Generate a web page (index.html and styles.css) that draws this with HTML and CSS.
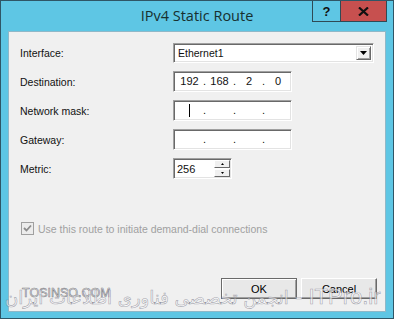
FILE: index.html
```html
<!DOCTYPE html>
<html lang="en">
<head>
    <meta charset="UTF-8">
    <meta name="viewport" content="width=device-width, initial-scale=1.0">
    <title>IPv4 Static Route</title>
    <link rel="stylesheet" href="styles.css">
</head>
<body>
    <!-- Dialog window -->
    <div class="window">
        <div class="titlebar">
            <div></div>
            <div class="title">IPv4 Static Route</div>
            <div class="caption-buttons">
                <span class="cap help">?</span>
                <span class="cap close">
                    <svg width="11" height="9" viewBox="0 0 11 9"><path d="M1 0.5 L10 8.5 M10 0.5 L1 8.5" stroke="#111" stroke-width="2.2"/></svg>
                </span>
            </div>
        </div>

        <div class="client">
            <div class="form">
                <label>Interface:</label>
                <div class="combo">
                    <span class="combo-text">Ethernet1</span>
                    <span class="drop">
                        <svg width="7" height="4" viewBox="0 0 7 4"><path d="M0 0 H7 L3.5 4 Z" fill="#000"/></svg>
                    </span>
                </div>

                <label>Destination:</label>
                <div class="ipbox">
                    <span>192</span><i>.</i><span>168</span><i>.</i><span>2</span><i>.</i><span>0</span>
                </div>

                <label>Network mask:</label>
                <div class="ipbox">
                    <span><b class="caret"></b></span><i>.</i><span></span><i>.</i><span></span><i>.</i><span></span>
                </div>

                <label>Gateway:</label>
                <div class="ipbox">
                    <span></span><i>.</i><span></span><i>.</i><span></span><i>.</i><span></span>
                </div>

                <label>Metric:</label>
                <div class="spin">
                    <span class="spin-text">256</span>
                    <span class="spin-btns">
                        <span class="spin-btn"><svg width="3" height="2" viewBox="0 0 3 2"><path d="M0 2 H3 L1.5 0 Z" fill="#000"/></svg></span>
                        <span class="spin-btn"><svg width="3" height="2" viewBox="0 0 3 2"><path d="M0 0 H3 L1.5 2 Z" fill="#000"/></svg></span>
                    </span>
                </div>
            </div>

            <div class="check-row">
                <span class="checkbox">
                    <svg width="9" height="9" viewBox="0 0 9 9"><path d="M1 4 L3.5 6.5 L8 1.5" fill="none" stroke="#8c8c8c" stroke-width="1.8"/></svg>
                </span>
                <span class="check-label">Use this route to initiate demand-dial connections</span>
            </div>

            <div class="buttons">
                <button class="btn default">OK</button>
                <button class="btn">Cancel</button>
            </div>
        </div>

        <!-- watermark over the bottom of the dialog -->
        <div class="mark-small">TOSINSO.COM</div>
        <div class="mark-big"><span class="mark-fa">انجمن تخصصی فناوری اطلاعات ایران</span><span class="mark-en"> - ITPro.ir</span></div>
    </div>
</body>
</html>
```

FILE: styles.css
```css
/* Page */
body {
    margin: 0;
    background: #ffffff;
}

/* Window frame */
.window {
    position: relative;
    width: 394px;
    height: 319px;
    box-sizing: border-box;
    border: 1px solid #2f5666;
    background: #5ec6e4;
    overflow: hidden;
}

.titlebar {
    display: grid;
    grid-template-columns: 1fr auto 1fr;
    height: 30px;
}

.title {
    font-family: "Open Sans", "Noto Sans", sans-serif;
    font-size: 14.5px;
    color: #17302f;
    line-height: 29px;
}

.caption-buttons {
    justify-self: end;
    align-self: start;
    display: flex;
    margin-right: 6px;
}

.cap {
    display: flex;
    align-items: center;
    justify-content: center;
    height: 20px;
    border: 1px solid #2f4a55;
    border-top: none;
    box-sizing: content-box;
}

.help {
    width: 27px;
    border-right: none;
    font-family: "Liberation Sans", sans-serif;
    font-weight: bold;
    font-size: 13px;
    color: #111;
}

.close {
    width: 45px;
    background: #c7504f;
}

/* Client area */
.client {
    margin: 0 7px;
    height: 281px;
    background: #f0f0f0;
    border: 1px solid #8fb8c8;
    box-sizing: border-box;
    padding: 11px 8px 0 11px;
    font-family: "Liberation Sans", Arial, sans-serif;
    font-size: 10.5px;
    color: #111;
}

.form {
    display: grid;
    grid-template-columns: 153px auto;
    row-gap: 8px;
    align-items: center;
    justify-items: start;
}

/* Sunken 3D field border */
.combo, .ipbox, .spin {
    box-sizing: border-box;
    background: #fff;
    border-top: 1px solid #a0a0a0;
    border-left: 1px solid #a0a0a0;
    border-right: 1px solid #ffffff;
    border-bottom: 1px solid #ffffff;
    box-shadow: inset 1px 1px 0 #696969, inset -1px -1px 0 #e3e3e3;
}

.combo {
    width: 201px;
    height: 20px;
    display: flex;
    align-items: center;
    justify-content: space-between;
    padding: 0 2px 0 4px;
}

.drop {
    width: 15px;
    height: 14px;
    display: flex;
    align-items: center;
    justify-content: center;
    background: #f0f0f0;
    box-sizing: border-box;
    border-top: 1px solid #e3e3e3;
    border-left: 1px solid #e3e3e3;
    border-right: 1px solid #696969;
    border-bottom: 1px solid #696969;
    box-shadow: inset 1px 1px 0 #fff, inset -1px -1px 0 #a0a0a0;
}

.ipbox {
    width: 119px;
    height: 21px;
    display: grid;
    grid-template-columns: 25px 5px 25px 5px 24px 5px 24px;
    align-items: center;
    padding-left: 3px;
    font-size: 11px;
}

.ipbox span {
    text-align: center;
    height: 13px;
    line-height: 13px;
}

.ipbox i {
    font-style: normal;
    text-align: center;
    line-height: 13px;
}

.caret {
    display: inline-block;
    width: 1px;
    height: 13px;
    background: #000;
    vertical-align: top;
}

.spin {
    width: 59px;
    height: 21px;
    display: flex;
    align-items: center;
    justify-content: space-between;
    padding: 0 1px 0 3px;
    font-size: 11px;
}

.spin-btns {
    display: flex;
    flex-direction: column;
    gap: 1px;
}

.spin-btn {
    width: 16px;
    height: 8px;
    display: flex;
    align-items: center;
    justify-content: center;
    background: #f0f0f0;
    box-sizing: border-box;
    border-top: 1px solid #ffffff;
    border-left: 1px solid #ffffff;
    border-right: 1px solid #696969;
    border-bottom: 1px solid #696969;
}

/* Checkbox row */
.check-row {
    display: flex;
    align-items: center;
    margin-top: 43px;
    margin-left: 1px;
    height: 13px;
}

.checkbox {
    width: 13px;
    height: 13px;
    box-sizing: border-box;
    border: 1px solid #a0a0a0;
    background: #ececec;
    display: flex;
    align-items: center;
    justify-content: center;
    margin-right: 4px;
}

.check-label {
    color: #a0a0a0;
}

/* Buttons */
.buttons {
    display: flex;
    justify-content: flex-end;
    gap: 4px;
    margin-top: 43px;
}

.btn {
    width: 76px;
    height: 21px;
    font-family: "Liberation Sans", Arial, sans-serif;
    font-size: 11px;
    color: #000;
    background: #e8e8e8;
    border-top: 1px solid #ffffff;
    border-left: 1px solid #ffffff;
    border-right: 1px solid #696969;
    border-bottom: 1px solid #696969;
    box-shadow: inset -1px -1px 0 #a0a0a0;
    padding: 0;
}

.btn.default {
    border: 1px solid #6a6a6a;
    box-shadow: inset 1px 1px 0 #ffffff, inset -1px -1px 0 #a0a0a0;
}

/* Watermark */
.mark-small {
    position: absolute;
    left: 21px;
    top: 285px;
    font-family: "Liberation Sans", sans-serif;
    font-size: 12.5px;
    color: rgba(255, 255, 255, 0.8);
    -webkit-text-stroke: 0.6px rgba(90, 90, 100, 0.8);
}

.mark-big {
    position: absolute;
    left: 4px;
    top: 283px;
    white-space: nowrap;
    color: rgba(255, 255, 255, 0.65);
    -webkit-text-stroke: 0.6px rgba(110, 110, 125, 0.6);
}

.mark-fa {
    font-family: "DejaVu Sans", sans-serif;
    font-size: 18px;
}

.mark-en {
    font-family: "Liberation Sans", sans-serif;
    font-size: 22px;
}
```
